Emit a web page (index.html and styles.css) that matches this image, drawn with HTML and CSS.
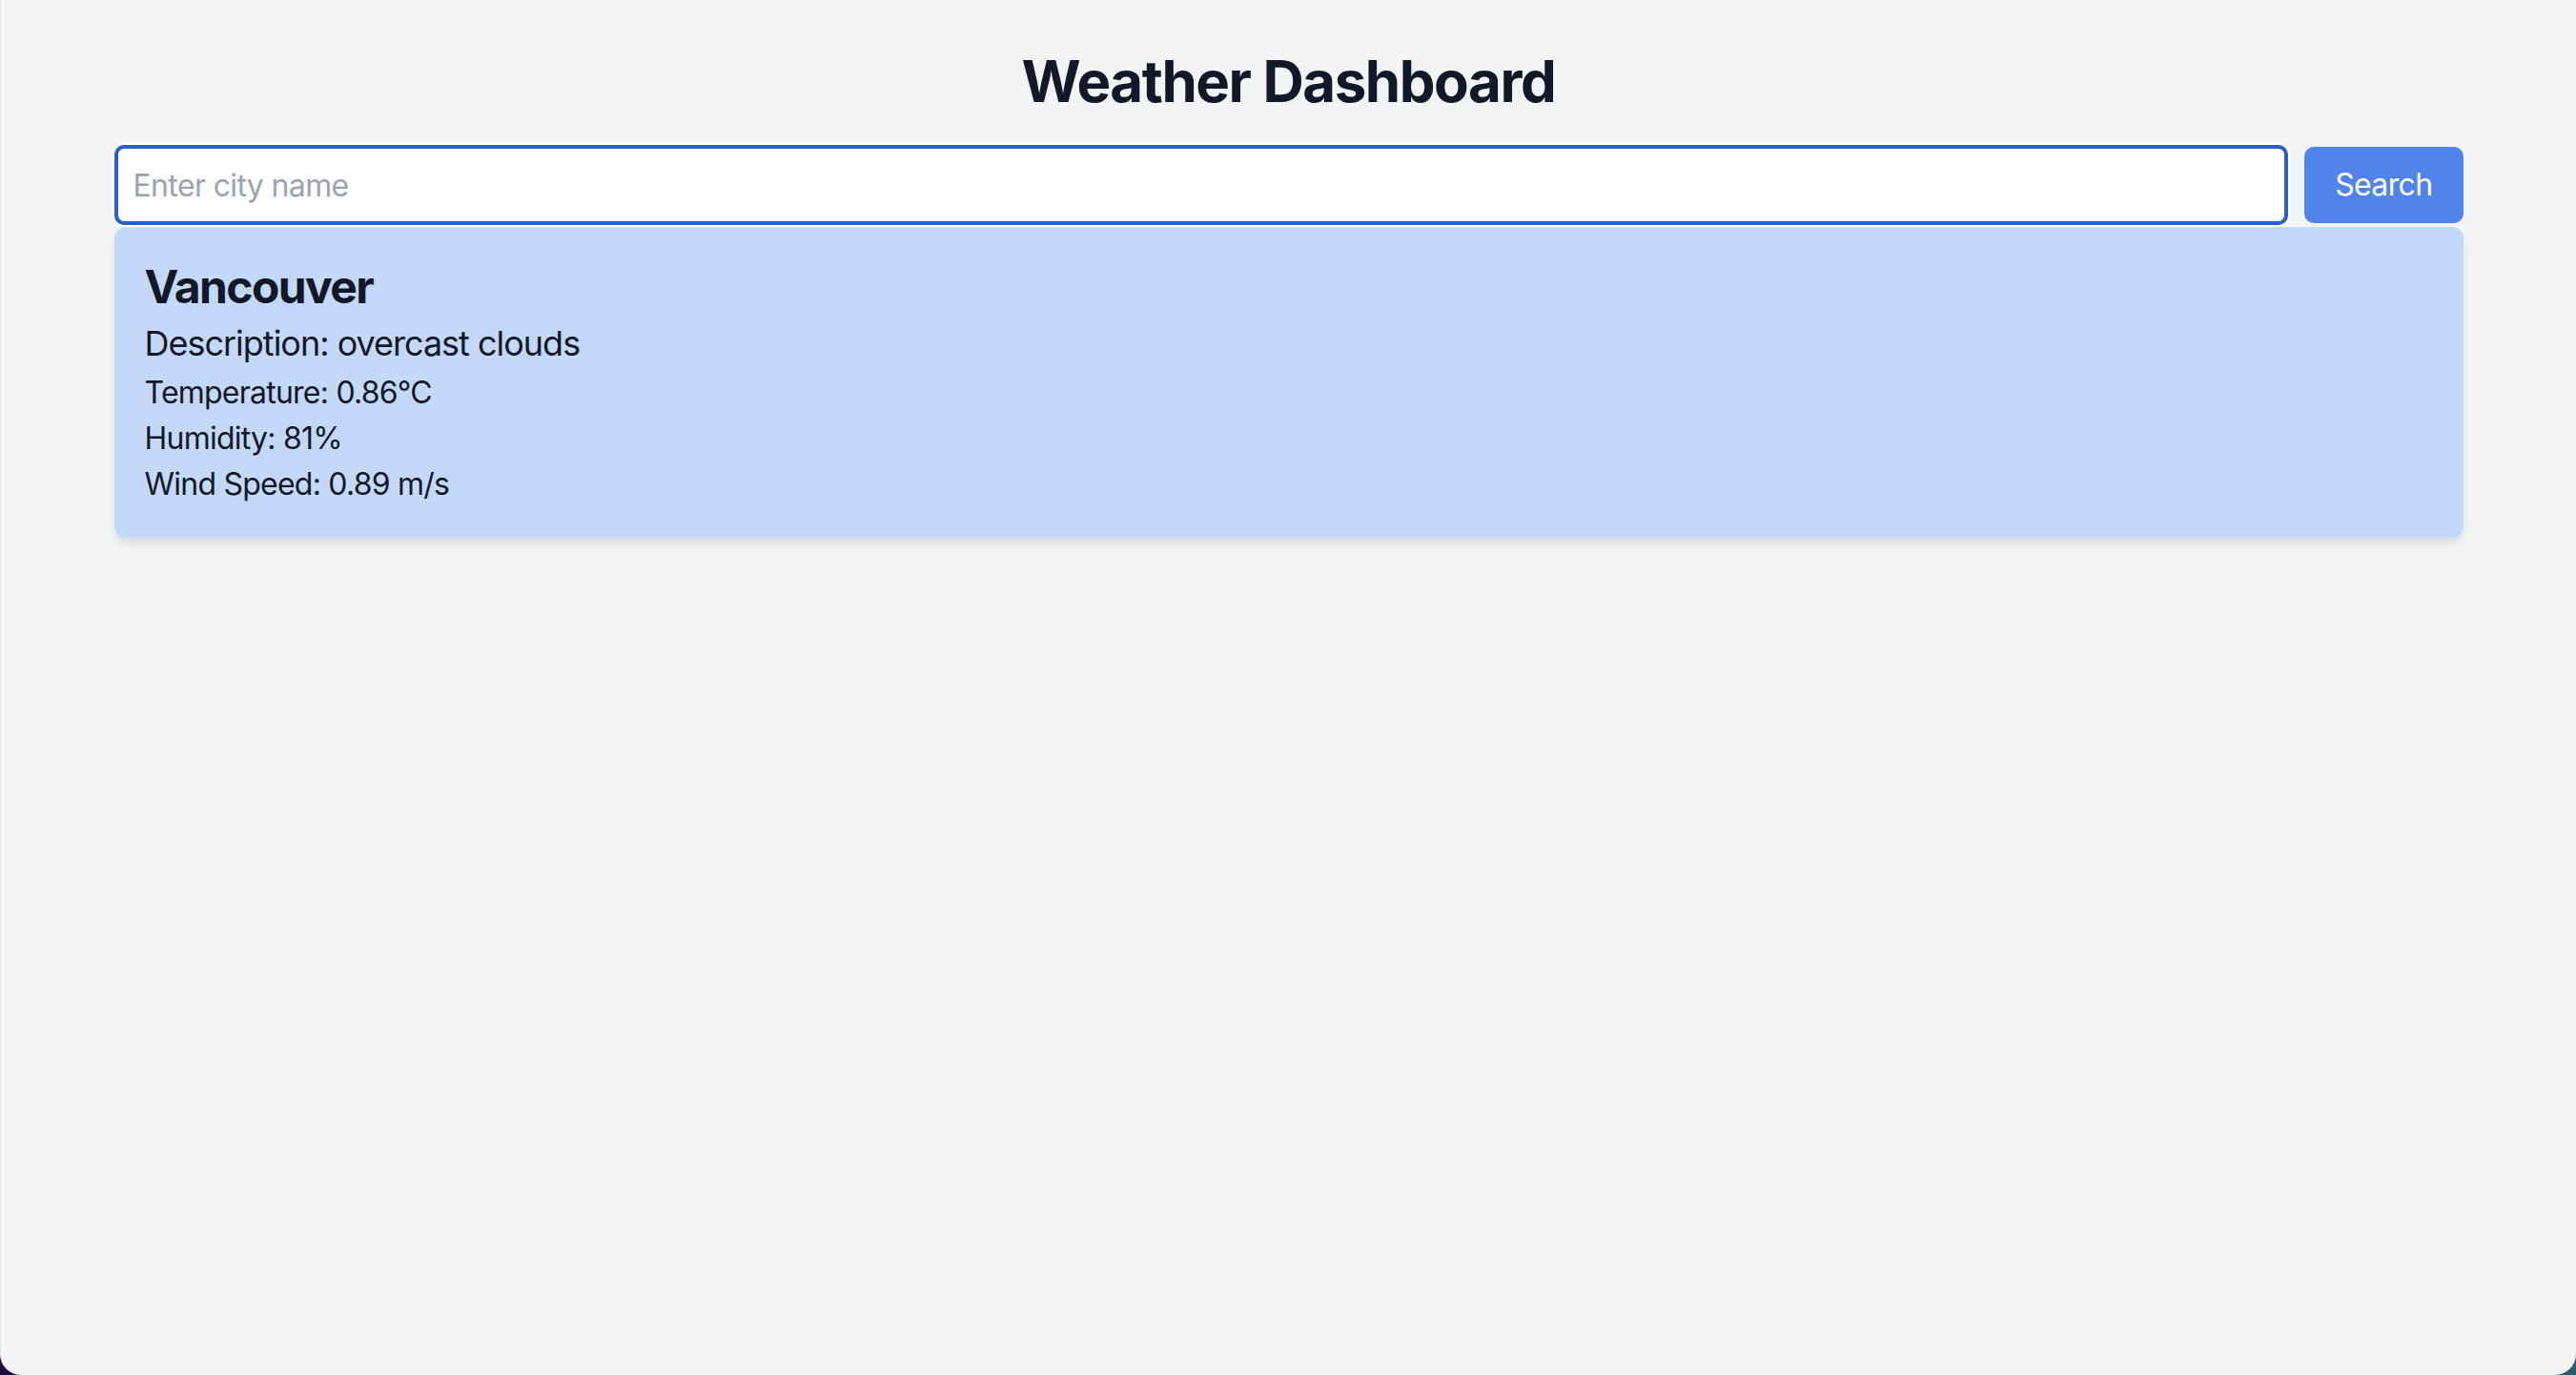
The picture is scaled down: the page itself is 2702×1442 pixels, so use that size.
FILE: index.html
```html
<!DOCTYPE html>
<html lang="en">
<head>
<meta charset="utf-8">
<title>Weather Dashboard</title>
<link rel="stylesheet" href="styles.css">
</head>
<body>
<div class="window">
  <main class="container">
    <h1 class="title">Weather Dashboard</h1>
    <div class="search-row">
      <input class="city-input" type="text" placeholder="Enter city name">
      <button class="search-btn" type="button">Search</button>
    </div>
    <section class="weather-card">
      <h2 class="city">Vancouver</h2>
      <p class="desc">Description: overcast clouds</p>
      <p class="stat">Temperature: 0.86°C</p>
      <p class="stat">Humidity: 81%</p>
      <p class="stat">Wind Speed: 0.89 m/s</p>
    </section>
  </main>
</div>
</body>
</html>
```
FILE: styles.css
```css
* {
  box-sizing: border-box;
}

html {
  height: 100%;
  background: linear-gradient(to right, #1c0b3a, #2e5a66);
}

body {
  margin: 0;
  height: 100%;
  font-family: Inter, "Noto Sans", "Liberation Sans", sans-serif;
  color: #111827;
  letter-spacing: -0.02em;
}

.window {
  height: 100%;
  background: #f3f4f6;
  border-radius: 0 0 22px 22px;
  border-left: 1px solid #e4e5e8;
}

.container {
  max-width: 2560px;
  margin: 0 auto;
  padding: 49px 48px;
}

.title {
  margin: 0 0 31px;
  font-size: 60px;
  line-height: 72px;
  font-weight: 700;
  text-align: center;
  color: #111827;
  letter-spacing: -0.024em;
}

.search-row {
  display: flex;
  align-items: center;
  gap: 17px;
}

.city-input {
  flex: 1;
  height: 84px;
  padding: 0 16px;
  border: 4px solid #2b5fc8;
  border-radius: 10px;
  box-shadow: 0 0 0 2px #ffffff;
  background: #ffffff;
  font-family: inherit;
  font-size: 32px;
  letter-spacing: -0.02em;
  color: #111827;
  outline: none;
}

.city-input::placeholder {
  color: #9ca3af;
}

.search-btn {
  height: 80px;
  padding: 0 32px;
  border: none;
  border-radius: 10px;
  background: #5083ec;
  color: #ffffff;
  font-family: inherit;
  font-size: 32px;
  line-height: 48px;
  letter-spacing: -0.02em;
}

.weather-card {
  margin-top: 2px;
  padding: 30px 32px 32px;
  background: #c4d9f9;
  border-radius: 12px;
  box-shadow: 0 8px 12px -2px rgba(0, 0, 0, 0.08), 0 4px 8px -4px rgba(0, 0, 0, 0.08);
}

.city {
  margin: 0;
  padding-top: 1px;
  font-size: 48px;
  line-height: 63px;
  font-weight: 700;
  letter-spacing: -0.034em;
}

.desc {
  margin: 0;
  font-size: 36px;
  line-height: 56px;
  letter-spacing: -0.028em;
}

.stat {
  margin: 0;
  font-size: 32px;
  line-height: 48px;
  letter-spacing: -0.024em;
}
```
